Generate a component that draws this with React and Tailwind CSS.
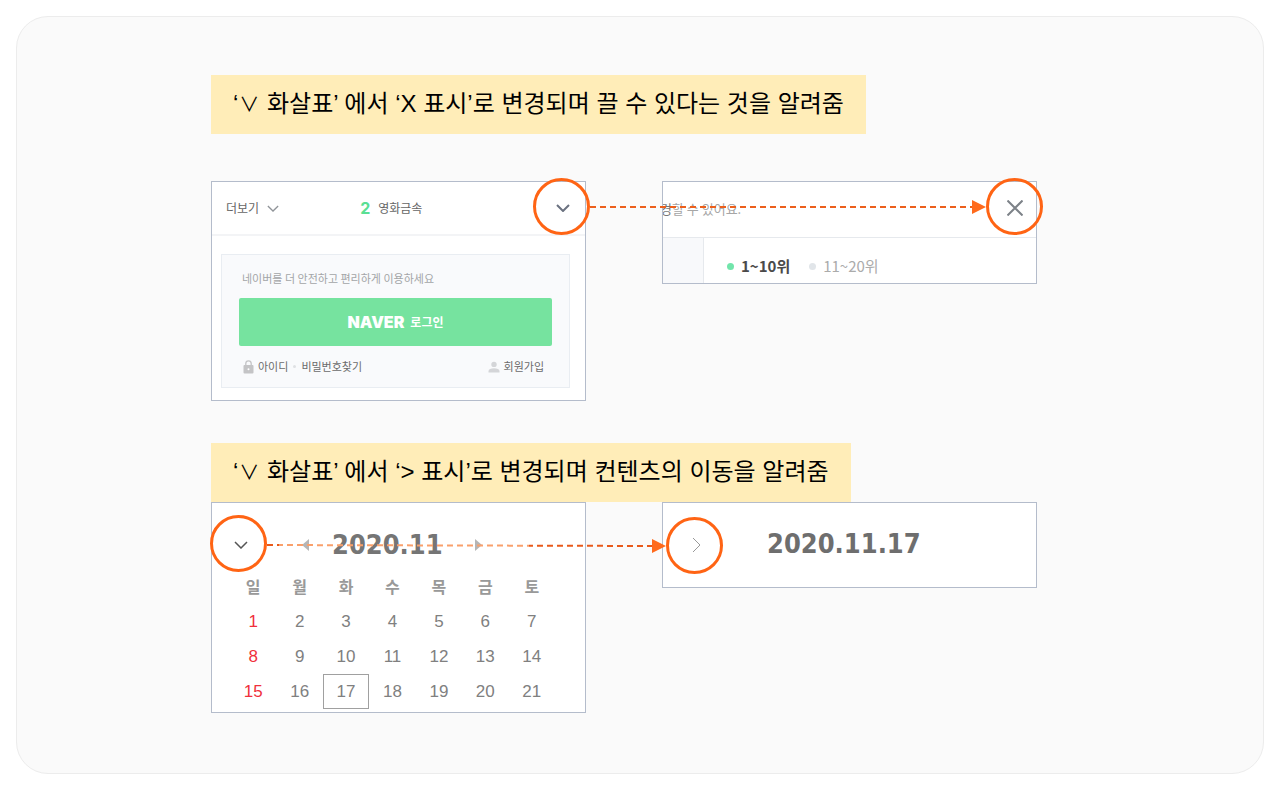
import React from 'react';

const weekDays = ['일', '월', '화', '수', '목', '금', '토'];

const weeks = [
  [1, 2, 3, 4, 5, 6, 7],
  [8, 9, 10, 11, 12, 13, 14],
  [15, 16, 17, 18, 19, 20, 21]
];

const today = 17;

const Chevron = ({ className, path = 'M1 1l6 6 6-6', viewBox = '0 0 14 8' }) => (
  <svg className={className} viewBox={viewBox} fill="none" stroke="currentColor" aria-hidden="true">
    <path d={path} />
  </svg>
);

const LockIcon = () => (
  <svg className="w-[11px] h-[14px] text-[#c4c4c6]" viewBox="0 0 11 14" aria-hidden="true">
    <path d="M2.8 6V3.6a2.7 2.7 0 0 1 5.4 0V6" fill="none" stroke="currentColor" strokeWidth="1.3" />
    <rect x="0.5" y="5" width="10" height="8.5" rx="1" fill="currentColor" />
    <circle cx="5.5" cy="9.2" r="1" fill="#fff" />
  </svg>
);

const PersonIcon = () => (
  <svg className="w-[12px] h-[12px] text-[#d4d5d8]" viewBox="0 0 12 12" fill="currentColor" aria-hidden="true">
    <circle cx="6" cy="3.4" r="2.7" />
    <path d="M0.5 11.5V10C0.5 8.3 3 7.3 6 7.3s5.500 1 5.500 2.700v1.500z" />
  </svg>
);

const Ring = ({ className = '' }) => (
  <span className={`block shrink-0 w-[57px] h-[57px] rounded-full border-3 border-[#ff6414] ${className}`} />
);

const ArrowHead = ({ className = '' }) => (
  <svg className={`shrink-0 w-[14px] h-[14px] ${className}`} viewBox="0 0 14 14" aria-hidden="true">
    <path d="M0 0l14 7-14 7z" fill="#ff6a1c" />
  </svg>
);

const Caption = ({ children }) => (
  <h2 className="w-fit px-[22px] h-[59px] leading-[58px] bg-[#ffedb8] font-['Liberation_Sans','Noto_Sans_CJK_KR',sans-serif] text-2xl text-black">
    ‘<span className="mx-px font-['Noto_Sans_CJK_KR',sans-serif] text-xl leading-none">∨</span> 화살표’ 에서 {children}
  </h2>
);

const MenuPanel = () => (
  <div className="bg-white border border-[#b4bccb]">
    <div className="flex items-center h-[54px] pl-3.5 pr-[15px] border-b-2 border-[#f3f4f6]">
      <button className="flex items-center gap-2 text-xs text-[#666]">
        더보기
        <Chevron className="w-[12px] h-[7px] stroke-[1.5] text-[#909499]" />
      </button>
      <a href="#rank" className="flex items-center gap-2 ml-[81px] text-xs text-[#666]">
        <span className="font-['Inter',sans-serif] text-base font-bold text-[#5adf94]">2</span>
        영화금속
      </a>
      <button aria-label="펼치기" className="ml-auto text-[#6b7280]">
        <Chevron className="w-[14px] h-[8px] stroke-2" />
      </button>
    </div>
    <div className="mt-[18px] ml-[9px] mr-[15px] mb-3 px-[17px] border border-[#e9edf2] bg-[#f9fafc]">
      <p className="pt-[15px] pl-[3px] text-[11px] leading-4 text-[#a3a5a7]">네이버를 더 안전하고 편리하게 이용하세요</p>
      <button className="flex items-center justify-center gap-1.5 w-full h-[48px] mt-3 rounded-xs bg-[#76e39f] text-white font-bold text-xs">
        <span className="font-['Inter',sans-serif] font-black text-base">NAVER</span>
        로그인
      </button>
      <div className="flex items-center justify-between h-[41px] pl-1 pr-2 text-[11px] text-[#6b6b6b]">
        <div className="flex items-center">
          <LockIcon />
          <a href="#id" className="ml-1">아이디</a>
          <span className="w-[3px] h-[3px] mx-[5px] rounded-full bg-[#dfe1e4]" />
          <a href="#password">비밀번호찾기</a>
        </div>
        <a href="#join" className="flex items-center gap-1">
          <PersonIcon />
          회원가입
        </a>
      </div>
    </div>
  </div>
);

const RankPanel = () => (
  <div className="bg-white border border-[#b4bccb]">
    <div className="flex items-center h-[56px] pr-[13px] pb-1 overflow-hidden border-b border-[#e6e9ed]">
      <p className="-ml-[3px] mt-0.5 text-[13px] text-[#a6a6a6]">
        <span className="text-[#777]">경</span>할 수 있어요.
      </p>
      <button aria-label="닫기" className="ml-auto text-[#7d8288]">
        <svg className="w-4 h-4" viewBox="0 0 16 16" fill="none" stroke="currentColor" strokeWidth="2">
          <path d="M0.500 0.500l15 15M15.500 0.500l-15 15" />
        </svg>
      </button>
    </div>
    <div className="flex h-[45px]">
      <div className="w-[41px] border-r border-[#e6e9ed] bg-[#f8f9fb]" />
      <div className="flex items-center gap-[19px] pl-[23px] pt-[11px] text-[15px]">
        <button className="flex items-center gap-[7px] font-bold text-[#4a4a4a]">
          <span className="w-[7px] h-[7px] rounded-full bg-[#72e5ab]" />
          1~10위
        </button>
        <button className="flex items-center gap-[7px] text-[#ababab]">
          <span className="w-[7px] h-[7px] rounded-full bg-[#e1e5e9]" />
          11~20위
        </button>
      </div>
    </div>
  </div>
);

const CalendarPanel = () => (
  <div className="bg-white border border-[#b4bccb]">
    <div className="flex items-center h-[66px] pt-[18px] pl-[22px]">
      <button aria-label="접기" className="text-[#555]">
        <Chevron className="w-[14px] h-[8px] stroke-[1.5]" />
      </button>
      <button aria-label="이전 달" className="ml-[54px] text-[#b5b5b5]">
        <svg className="w-[7px] h-[12px]" viewBox="0 0 7 12" fill="currentColor">
          <path d="M7 0v12L0 6z" />
        </svg>
      </button>
      <h3 className="ml-[23px] font-['DejaVu_Sans_Condensed','Noto_Sans',sans-serif] font-bold text-[27px] leading-8 text-[#757575]">
        2020.11
      </h3>
      <button aria-label="다음 달" className="ml-[32px] text-[#b5b5b5]">
        <svg className="w-[7px] h-[12px]" viewBox="0 0 7 12" fill="currentColor">
          <path d="M0 0v12l7-6z" />
        </svg>
      </button>
    </div>
    <table className="table-fixed w-[325px] ml-[18px] mb-[3px] text-center text-[17px] text-[#808080]">
      <thead>
        <tr className="h-[35px]">
          {weekDays.map((day) => (
            <th key={day} className="p-0 pb-0.5 text-base leading-6 font-bold text-[#999]">{day}</th>
          ))}
        </tr>
      </thead>
      <tbody className="font-['Liberation_Sans',sans-serif]">
        {weeks.map((week) => (
          <tr key={week[0]} className="h-[35px]">
            {week.map((date, index) => (
              <td
                key={date}
                className={`p-0 leading-6 ${index === 0 ? 'text-[#f0303c]' : ''} ${
                  date === today ? 'outline -outline-offset-1 outline-[#a0a0a0]' : ''
                }`}
              >
                {date}
              </td>
            ))}
          </tr>
        ))}
      </tbody>
    </table>
  </div>
);

const DatePanel = () => (
  <div className="flex items-center h-[86px] pl-[29px] bg-white border border-[#b4bccb]">
    <button aria-label="이동" className="text-[#999]">
      <Chevron className="w-[9px] h-[16px]" viewBox="0 0 9 16" path="M1 1l7 7-7 7" />
    </button>
    <h3 className="ml-[66px] mb-0.5 font-['DejaVu_Sans_Condensed','Noto_Sans',sans-serif] font-bold text-[27px] leading-8 text-[#6e6e6e]">
      2020.11.17
    </h3>
  </div>
);

export default function App() {
  return (
    <div className="p-4 bg-white font-['Noto_Sans_CJK_KR',sans-serif]">
      <main className="rounded-[32px] border border-[#ececec] bg-[#fafafa] pt-[58px] pb-[60px] pl-[194px] pr-8">
        <section className="max-w-[826px]">
          <Caption>‘X 표시’로 변경되며 끌 수 있다는 것을 알려줌</Caption>
          <div className="relative grid grid-cols-2 items-start gap-x-[76px] mt-[47px]">
            <MenuPanel />
            <RankPanel />
            {/* Menu toggle to close button */}
            <div className="absolute -top-[3px] left-[322px] -right-[6px] flex items-center pointer-events-none">
              <Ring />
              <svg className="flex-1 min-w-0 h-[57px]" aria-hidden="true">
                <line x1="0" y1="29" x2="100%" y2="29" stroke="#ec5f1c" strokeWidth="2" strokeDasharray="6 4" />
              </svg>
              <ArrowHead />
              <Ring />
            </div>
          </div>
        </section>

        <section className="max-w-[826px] mt-[42px]">
          <Caption>‘&gt; 표시’로 변경되며 컨텐츠의 이동을 알려줌</Caption>
          <div className="relative grid grid-cols-2 items-start gap-x-[76px]">
            <CalendarPanel />
            <DatePanel />
            {/* Calendar toggle to date link */}
            <div className="absolute top-[13px] -left-px right-[calc(50%-99px)] flex h-[59px] pointer-events-none">
              <Ring />
              <svg className="flex-1 min-w-0 h-full" aria-hidden="true">
                <defs>
                  <linearGradient id="fade" gradientUnits="userSpaceOnUse" x1="0" y1="0" x2="100%" y2="0">
                    <stop offset="0.03" stopColor="#e8591a" />
                    <stop offset="0.03" stopColor="#f9a06c" />
                    <stop offset="0.68" stopColor="#f9a06c" />
                    <stop offset="0.68" stopColor="#e8591a" />
                  </linearGradient>
                </defs>
                <line x1="0" y1="30" x2="100%" y2="31" stroke="url(#fade)" strokeWidth="2" strokeDasharray="6 4" />
              </svg>
              <ArrowHead className="self-end mb-[21px]" />
              <Ring className="self-end" />
            </div>
          </div>
        </section>
      </main>
    </div>
  );
}
